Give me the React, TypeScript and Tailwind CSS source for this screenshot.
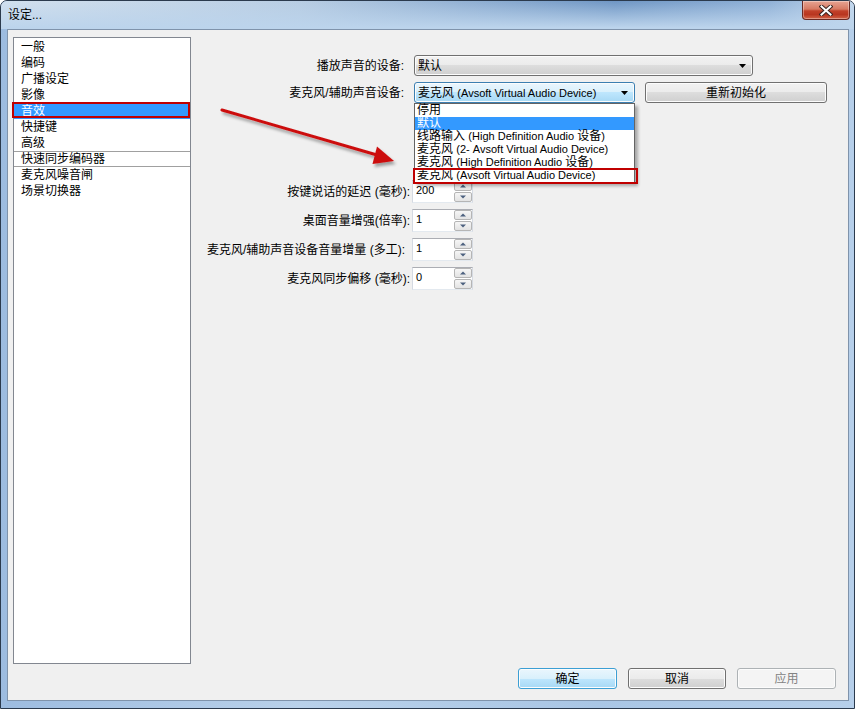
import type { ReactNode } from 'react';

const btnBase =
  'flex items-center rounded-[3px] border text-[12px] leading-none shadow-[inset_0_0_0_1px_#fcfcfc]';
const btnGray =
  'border-[#707070] bg-[linear-gradient(180deg,#f2f2f2_0%,#ebebeb_50%,#dddddd_50%,#cfcfcf_100%)]';
const btnBlue =
  'border-[#3c7fb1] bg-[linear-gradient(180deg,#eaf6fd_0%,#d9f0fc_50%,#bee6fd_50%,#a7d9f5_100%)]';

const ComboArrow = () => (
  <svg width="8" height="4" viewBox="0 0 8 4" className="shrink-0">
    <path d="M0 0h7L3.5 4z" fill="#000" />
  </svg>
);

const SpinArrow = ({ up }: { up?: boolean }) => (
  <svg width="6" height="4" viewBox="0 0 6 4">
    <path d={up ? 'M0 3.5h6L3 0.5z' : 'M0 0.5h6L3 3.5z'} fill="#4c607f" />
  </svg>
);

function Spin({ value }: { value: string }) {
  return (
    <div className="ml-[2px] flex h-[23px] w-[61px] border border-[#abadb3] border-x-[#d5dae2] border-b-[#e3e9ef] bg-white">
      <div className="flex-1 pl-[3px] text-[11px] leading-[18px]">{value}</div>
      <div className="flex w-[18px] flex-col gap-[1px]">
        <div className="flex h-[10px] items-center justify-center rounded-[2px] border border-[#b5b5b5] bg-[linear-gradient(180deg,#f6f6f6,#e3e3e3)]">
          <SpinArrow up />
        </div>
        <div className="flex h-[10px] items-center justify-center rounded-[2px] border border-[#b5b5b5] bg-[linear-gradient(180deg,#f6f6f6,#e3e3e3)]">
          <SpinArrow />
        </div>
      </div>
    </div>
  );
}

function Row({ label, children, pr, h }: { label: string; children: ReactNode; pr: string; h: string }) {
  return (
    <div className={`flex items-center ${h}`}>
      <div className={`w-[219px] text-right text-[12px] leading-none whitespace-nowrap ${pr}`}>{label}</div>
      {children}
    </div>
  );
}

const L = ({ children }: { children: ReactNode }) => <span className="text-[11px]">{children}</span>;

export default function App() {
  const list = ['一般', '编码', '广播设定', '影像', '音效', '快捷键', '高级'];

  return (
    <div className="relative flex h-[709px] w-[855px] flex-col overflow-hidden rounded-t-[7px] border border-[#2b3a4d] bg-[linear-gradient(90deg,#9dbce0_0%,#b9d1ea_35%,#a9c6e5_70%,#b6cfea_100%)] font-['Liberation_Sans','Noto_Sans_CJK_SC',sans-serif] text-black">
      {/* title bar */}
      <div className="flex h-[28px] shrink-0 justify-between bg-[linear-gradient(180deg,rgba(190,212,236,0)_0%,#bcd4ec_95%),linear-gradient(90deg,#d2e0ee_0%,#b8cde3_35%,#6f96c4_72%,#8fb0d6_90%,#c5d9ee_100%)] pl-[7px] pr-[4px]">
        <div className="self-center text-[12px] leading-none">设定...</div>
        <div className="flex h-[19px] w-[48px] items-center justify-center rounded-b-[4px] border border-t-0 border-[#6a2a24] bg-[linear-gradient(180deg,#e7a493_0%,#d77a63_45%,#c1412a_55%,#b93620_75%,#d26448_100%)] shadow-[inset_0_0_0_1px_rgba(255,255,255,0.35)]">
          <svg width="14" height="11" viewBox="0 0 14 11">
            <path d="M2.5 1.5l9 8M11.5 1.5l-9 8" stroke="#3b2622" strokeWidth="4" strokeLinecap="square" />
            <path d="M2.5 1.5l9 8M11.5 1.5l-9 8" stroke="#ffffff" strokeWidth="2" strokeLinecap="square" />
          </svg>
        </div>
      </div>

      {/* client area */}
      <div className="ml-[6px] flex h-[672px] w-[842px] shrink-0 flex-col border border-[#7f93ab] bg-[#f0f0f0]">
        <div className="flex flex-1">
          {/* list */}
          <div className="ml-[5px] mt-[7px] h-[627px] w-[178px] shrink-0 border border-[#828790] bg-white pt-[1px] text-[12px]">
            {list.map((t) =>
              t === '音效' ? (
                <div key={t} className="relative h-[16px] bg-[#3399ff] pl-[7px] leading-[16px] text-white">
                  {t}
                  <div className="absolute -left-[2px] -top-[1px] bottom-[1px] right-0 border-2 border-[#c00000]" />
                </div>
              ) : (
                <div key={t} className="h-[16px] pl-[7px] leading-[16px]">
                  {t}
                </div>
              )
            )}
            <div className="h-[16px] border-y border-[#a0a0a0] pl-[7px] leading-[14px]">快速同步编码器</div>
            <div className="h-[16px] pl-[7px] leading-[16px]">麦克风噪音闸</div>
            <div className="h-[16px] pl-[7px] leading-[16px]">场景切换器</div>
          </div>

          {/* settings */}
          <div className="flex flex-col pt-[25px]">
            <Row label="播放声音的设备:" pr="pr-[6px]" h="h-[21px]">
              <div className={`${btnBase} ${btnGray} ml-[4px] h-[21px] w-[339px] justify-between pl-[3px] pr-[5px]`}>
                <span>默认</span>
                <ComboArrow />
              </div>
            </Row>
            <Row label="麦克风/辅助声音设备:" pr="pr-[6px]" h="mt-[6px] h-[21px]">
              <div className="relative ml-[4px]">
                <div className={`${btnBase} ${btnBlue} h-[21px] w-[221px] justify-between pl-[3px] pr-[5px]`}>
                  <span>
                    麦克风 <L>(Avsoft Virtual Audio Device)</L>
                  </span>
                  <ComboArrow />
                </div>
                {/* open dropdown */}
                <div className="absolute left-0 top-[21px] z-10 w-[221px] border border-[#646464] bg-white text-[12px] leading-[13px] shadow-[3px_3px_3px_rgba(0,0,0,0.3)]">
                  <div className="h-[13px] pl-[2px]">停用</div>
                  <div className="h-[13px] bg-[#3399ff] pl-[2px] text-white">默认</div>
                  <div className="h-[13px] pl-[2px] whitespace-nowrap">
                    线路输入 <L>(High Definition Audio </L>设备<L>)</L>
                  </div>
                  <div className="h-[13px] pl-[2px] whitespace-nowrap">
                    麦克风 <L>(2- Avsoft Virtual Audio Device)</L>
                  </div>
                  <div className="h-[13px] pl-[2px] whitespace-nowrap">
                    麦克风 <L>(High Definition Audio </L>设备<L>)</L>
                  </div>
                  <div className="relative h-[13px] pl-[2px] whitespace-nowrap">
                    麦克风 <L>(Avsoft Virtual Audio Device)</L>
                    <div className="absolute -left-[2px] -right-[4px] -top-[1px] -bottom-[2px] border-2 border-[#c00000]" />
                  </div>
                </div>
              </div>
              <div className={`${btnBase} ${btnGray} ml-[10px] h-[21px] w-[182px] justify-center`}>重新初始化</div>
            </Row>

            <div className="mt-[77px] flex flex-col gap-[6px]">
              <Row label="按键说话的延迟 (毫秒):" pr="pr-0" h="h-[23px]">
                <Spin value="200" />
              </Row>
              <Row label="桌面音量增强(倍率):" pr="pr-0" h="h-[23px]">
                <Spin value="1" />
              </Row>
              <Row label="麦克风/辅助声音设备音量增量 (多工):" pr="pr-[5px]" h="h-[23px]">
                <Spin value="1" />
              </Row>
              <Row label="麦克风同步偏移 (毫秒):" pr="pr-0" h="h-[23px]">
                <Spin value="0" />
              </Row>
            </div>
          </div>
        </div>

        {/* bottom buttons */}
        <div className="mb-[11px] mt-[4px] flex justify-end gap-[11px] pr-[12px]">
          <div className={`${btnBase} ${btnBlue} h-[21px] w-[99px] justify-center border-[#3c9fd4]`}>确定</div>
          <div className={`${btnBase} ${btnGray} h-[21px] w-[98px] justify-center`}>取消</div>
          <div className={`${btnBase} h-[21px] w-[99px] justify-center border-[#adb2b5] bg-[#f4f4f4] text-[#838383]`}>应用</div>
        </div>
      </div>

      {/* annotation arrow */}
      <svg className="pointer-events-none absolute left-[214px] top-[99px] z-20" width="190" height="80" viewBox="0 0 190 80">
        <defs>
          <filter id="sh" x="-10%" y="-30%" width="130%" height="180%">
            <feDropShadow dx="2" dy="3" stdDeviation="1.5" floodColor="#000" floodOpacity="0.35" />
          </filter>
        </defs>
        <g filter="url(#sh)">
          <path d="M7 10L162 55" stroke="#cc1010" strokeWidth="3" strokeLinecap="round" />
          <path d="M179 61L162 46.5L157.5 64z" fill="#cc1010" />
        </g>
      </svg>
    </div>
  );
}
